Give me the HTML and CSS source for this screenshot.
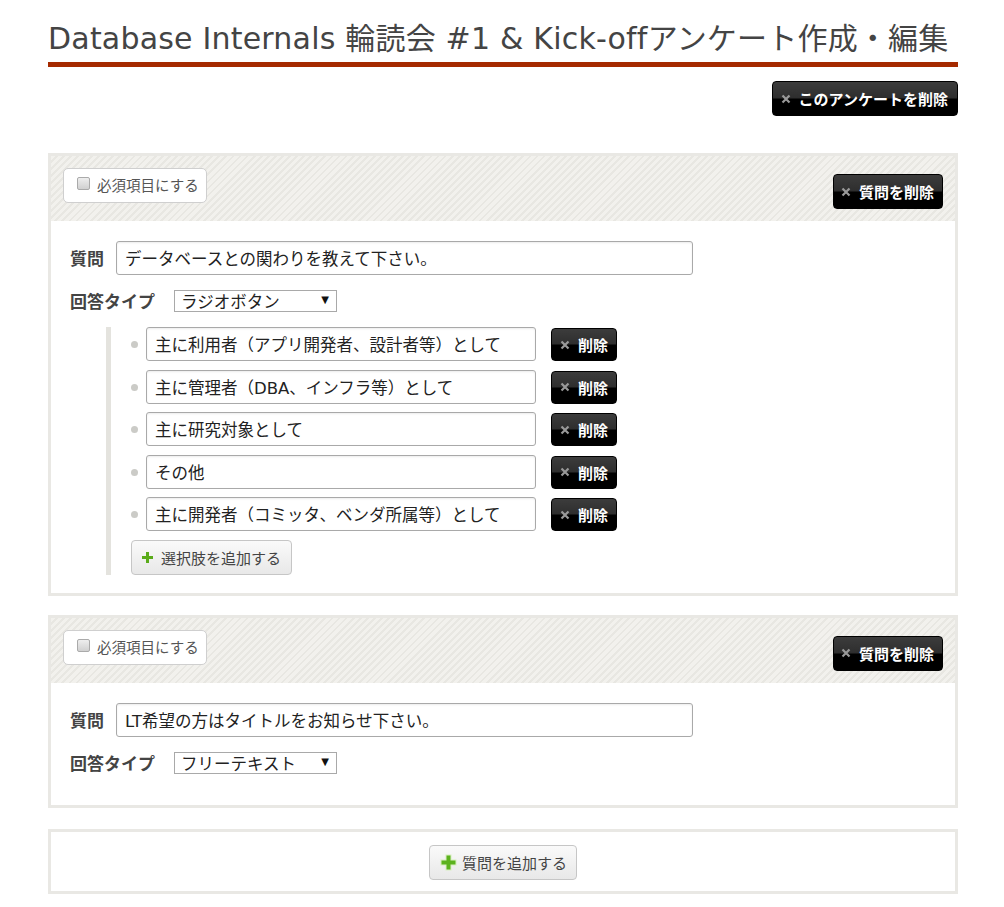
FILE: index.html
```html
<!DOCTYPE html>
<html lang="ja">
<head>
<meta charset="utf-8">
<title>アンケート作成・編集</title>
<link rel="stylesheet" href="styles.css">
</head>
<body>
<div class="page">
  <h1 class="title">Database Internals 輪読会 #1 &amp; Kick-offアンケート作成・編集</h1>

  <div class="top-actions">
    <button class="btn-dark btn-dark--lg"><svg class="x" width="10" height="10" viewBox="0 0 10 10"><path d="M1.5 1.5l7 7M8.5 1.5l-7 7" stroke="#999" stroke-width="2.2"/></svg>このアンケートを削除</button>
  </div>

  <section class="panel">
    <div class="panel-head">
      <label class="req"><input type="checkbox" class="req-box"><span>必須項目にする</span></label>
      <button class="btn-dark btn-dark--head"><svg class="x" width="10" height="10" viewBox="0 0 10 10"><path d="M1.5 1.5l7 7M8.5 1.5l-7 7" stroke="#999" stroke-width="2.2"/></svg>質問を削除</button>
    </div>
    <div class="panel-body">
      <div class="row">
        <span class="label">質問</span>
        <input class="q-input" type="text" value="データベースとの関わりを教えて下さい。">
      </div>
      <div class="row row--type">
        <span class="label">回答タイプ</span>
        <span class="select-wrap"><select class="type-select"><option>ラジオボタン</option></select></span>
      </div>
      <div class="options">
        <div class="opt"><span class="dot"></span><input class="opt-input" type="text" value="主に利用者（アプリ開発者、設計者等）として"><button class="btn-dark btn-dark--sm"><svg class="x" width="10" height="10" viewBox="0 0 10 10"><path d="M1.5 1.5l7 7M8.5 1.5l-7 7" stroke="#999" stroke-width="2.2"/></svg>削除</button></div>
        <div class="opt"><span class="dot"></span><input class="opt-input" type="text" value="主に管理者（DBA、インフラ等）として"><button class="btn-dark btn-dark--sm"><svg class="x" width="10" height="10" viewBox="0 0 10 10"><path d="M1.5 1.5l7 7M8.5 1.5l-7 7" stroke="#999" stroke-width="2.2"/></svg>削除</button></div>
        <div class="opt"><span class="dot"></span><input class="opt-input" type="text" value="主に研究対象として"><button class="btn-dark btn-dark--sm"><svg class="x" width="10" height="10" viewBox="0 0 10 10"><path d="M1.5 1.5l7 7M8.5 1.5l-7 7" stroke="#999" stroke-width="2.2"/></svg>削除</button></div>
        <div class="opt"><span class="dot"></span><input class="opt-input" type="text" value="その他"><button class="btn-dark btn-dark--sm"><svg class="x" width="10" height="10" viewBox="0 0 10 10"><path d="M1.5 1.5l7 7M8.5 1.5l-7 7" stroke="#999" stroke-width="2.2"/></svg>削除</button></div>
        <div class="opt"><span class="dot"></span><input class="opt-input" type="text" value="主に開発者（コミッタ、ベンダ所属等）として"><button class="btn-dark btn-dark--sm"><svg class="x" width="10" height="10" viewBox="0 0 10 10"><path d="M1.5 1.5l7 7M8.5 1.5l-7 7" stroke="#999" stroke-width="2.2"/></svg>削除</button></div>
        <button class="btn-light btn-light--opt">
          <svg class="plus-sm" width="11" height="11" viewBox="0 0 11 11"><path d="M4 0h3v4h4v3H7v4H4V7H0V4h4z" fill="#5aab1a"/></svg>
          <span>選択肢を追加する</span>
        </button>
      </div>
    </div>
  </section>

  <section class="panel">
    <div class="panel-head">
      <label class="req"><input type="checkbox" class="req-box"><span>必須項目にする</span></label>
      <button class="btn-dark btn-dark--head"><svg class="x" width="10" height="10" viewBox="0 0 10 10"><path d="M1.5 1.5l7 7M8.5 1.5l-7 7" stroke="#999" stroke-width="2.2"/></svg>質問を削除</button>
    </div>
    <div class="panel-body panel-body--free">
      <div class="row">
        <span class="label">質問</span>
        <input class="q-input" type="text" value="LT希望の方はタイトルをお知らせ下さい。">
      </div>
      <div class="row row--type">
        <span class="label">回答タイプ</span>
        <span class="select-wrap"><select class="type-select"><option>フリーテキスト</option></select></span>
      </div>
    </div>
  </section>

  <section class="panel panel--add">
    <button class="btn-light btn-light--q">
      <svg class="plus-lg" width="17" height="17" viewBox="0 0 17 17"><path d="M5.5 0.5h6v5h5v6h-5v5h-6v-5h-5v-6h5z" fill="#d8f0c0"/><path d="M6.5 1.5h4v5h5v4h-5v5h-4v-5h-5v-4h5z" fill="#5cb21e"/></svg>
      <span>質問を追加する</span>
    </button>
  </section>
</div>
</body>
</html>
```

FILE: styles.css
```css
* { box-sizing: border-box; }

body {
  margin: 0;
  background: #fff;
  color: #333;
  font-family: "DejaVu Sans", "Noto Sans CJK JP", sans-serif;
  line-height: 1.2;
}

.page {
  width: 910px;
  margin-left: 48px;
}

.title {
  margin: 0;
  padding: 19px 0 3px;
  font-size: 30px;
  letter-spacing: 0.2px;
  line-height: 40px;
  font-weight: 400;
  color: #444;
  white-space: nowrap;
  border-bottom: 5px solid #a52a00;
}

.top-actions {
  display: flex;
  justify-content: flex-end;
  margin-top: 14px;
  margin-bottom: 37px;
}

.btn-dark {
  display: inline-flex;
  align-items: center;
  gap: 8px;
  border: 1px solid #000;
  border-radius: 4px;
  background: linear-gradient(#3c3c3c 0, #2e2e2e 48%, #000 52%, #000 100%);
  color: #fff;
  font-family: "Noto Sans CJK JP", sans-serif;
  font-weight: 700;
  font-size: 15px;
  line-height: 1;
  cursor: pointer;
  white-space: nowrap;
}
.btn-dark .x {
  flex: none;
  display: block;
}
.btn-dark--lg { height: 35px; padding: 0 9px 0 8px; }
.btn-dark--head { height: 35px; padding: 0 8px 0 7px; margin-top: 6px; }
.btn-dark--sm { height: 33px; padding: 0 8px 0 8px; margin-left: 15px; margin-top: 1px; gap: 8px; }

.panel {
  border: 3px solid #e9e8e4;
  margin-bottom: 19px;
}

.panel-head {
  display: flex;
  justify-content: space-between;
  align-items: flex-start;
  padding: 12px;
  background: repeating-linear-gradient(135deg, #f2f1ed 0, #f2f1ed 3px, #e8e7e2 3px, #e8e7e2 5px);
}

.req {
  display: inline-flex;
  align-items: center;
  gap: 7px;
  height: 35px;
  padding: 0 7px 0 13px;
  background: #fff;
  border: 1px solid #cfcfcf;
  border-radius: 5px;
  font-family: "Noto Sans CJK JP", sans-serif;
  font-size: 14.5px;
  line-height: 1;
  color: #555;
}
.req-box {
  appearance: none;
  margin: 0;
  width: 13px;
  height: 13px;
  border: 1px solid #aaa;
  border-radius: 2px;
  background: linear-gradient(#eee, #d0d0d0);
  position: relative;
  top: -2px;
}

.panel-body {
  background: #fff;
  padding: 20px 19px 18px;
}
.panel-body--free { padding-bottom: 31px; }

.row {
  display: flex;
  align-items: center;
  gap: 12px;
}
.row--type { margin-top: 15px; gap: 19px; }

.label {
  font-family: "Noto Sans CJK JP", sans-serif;
  font-weight: 700;
  font-size: 17px;
  line-height: 22px;
  color: #444;
}

.q-input, .opt-input {
  height: 34px;
  border: 1px solid #a9a9a9;
  border-radius: 3px;
  box-shadow: inset 0 1px 2px rgba(0,0,0,0.08);
  padding: 0 8px;
  font-family: "DejaVu Sans", "Noto Sans CJK JP", sans-serif;
  font-size: 16.5px;
  line-height: 20px;
  color: #222;
  background: #fff;
}
.q-input { width: 577px; }
.opt-input { width: 390px; }

.select-wrap {
  position: relative;
  display: block;
  height: 22px;
}
.select-wrap::after {
  content: "▼";
  position: absolute;
  right: 8px;
  top: 5px;
  font-family: "DejaVu Sans", sans-serif;
  font-size: 10px;
  line-height: 1;
  color: #111;
  pointer-events: none;
}
.type-select {
  appearance: none;
  display: block;
  width: 163px;
  height: 22px;
  border: 1px solid #a9a9a9;
  border-radius: 0;
  background: #fff;
  padding: 0 0 0 6px;
  font-family: "Noto Sans CJK JP", sans-serif;
  font-size: 16.5px;
  line-height: 20px;
  color: #222;
}

.options {
  margin: 15px 0 0 36px;
  border-left: 5px solid #e4e3de;
  padding-left: 20px;
  display: flex;
  flex-direction: column;
  align-items: flex-start;
}
.opt {
  display: flex;
  align-items: flex-start;
  height: 34px;
  margin-bottom: 8.5px;
}
.dot {
  width: 7px;
  height: 7px;
  border-radius: 50%;
  background: #cbcbc7;
  margin: 14px 8px 0 0;
}

.btn-light {
  display: inline-flex;
  align-items: center;
  gap: 8px;
  height: 35px;
  border: 1px solid #c6c6c6;
  border-radius: 4px;
  background: linear-gradient(#fafafa, #e8e8e8);
  color: #444;
  font-family: "Noto Sans CJK JP", sans-serif;
  font-size: 15px;
  line-height: 1;
  cursor: pointer;
  white-space: nowrap;
}
.btn-light--opt { padding: 0 10px 0 10px; }
.btn-light--q { padding: 0 9px 0 10px; gap: 5px; }

.panel--add {
  display: flex;
  justify-content: center;
  margin-top: 21px;
  padding: 13px 0 11px;
}
```
